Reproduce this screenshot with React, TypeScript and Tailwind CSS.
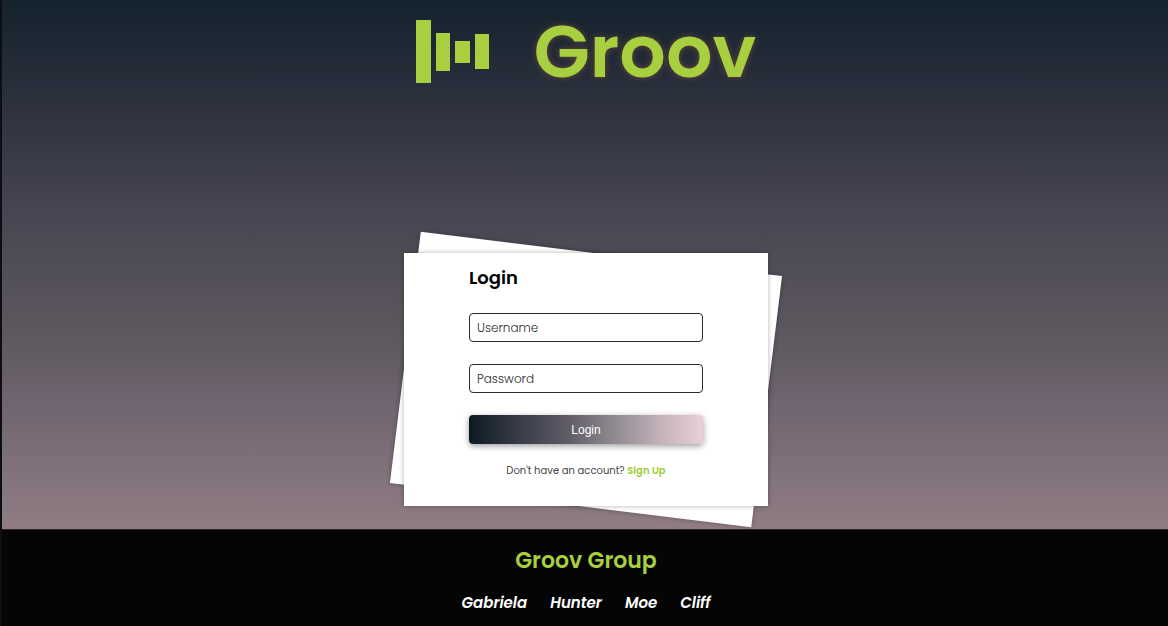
import React from "react";

const members = ["Gabriela", "Hunter", "Moe", "Cliff"];

function Logo() {
  return (
    <svg width="74" height="64" viewBox="0 0 74 64" fill="#a7cf40" aria-hidden="true">
      <rect x="0" y="0" width="15" height="63" />
      <rect x="20" y="13" width="14" height="38" />
      <rect x="39" y="21" width="15" height="22" />
      <rect x="59" y="14" width="14" height="35" />
    </svg>
  );
}

function Header() {
  return (
    <header className="flex items-center justify-center gap-11 pt-4">
      <Logo />
      <h1 className="text-[73px] leading-[72px] font-semibold text-[#a7cf40] [text-shadow:0_0_6px_rgba(220,120,60,0.4)]">
        Groov
      </h1>
    </header>
  );
}

function Field({ id, label, type }: { id: string; label: string; type: string }) {
  return (
    <input
      id={id}
      type={type}
      aria-label={label}
      placeholder={label}
      className="mb-[22px] block h-[29px] w-full rounded-[4px] border border-[#2b2b2b] bg-white px-[7px] text-xs font-light text-[#333] placeholder:text-[#2b2b2b]"
    />
  );
}

function LoginCard() {
  return (
    <section className="relative isolate w-[364px] bg-white px-[65px] pt-3 pb-[25px]">
      <div className="absolute inset-0 -z-20 rotate-7 bg-white shadow-[0_0_5px_rgba(0,0,0,0.3)]" />
      <div className="absolute inset-0 -z-10 bg-white shadow-[0_0_5px_rgba(0,0,0,0.3)]" />
      <form onSubmit={(event) => event.preventDefault()}>
        <h2 className="mb-[22px] text-[18px] leading-[26px] font-semibold text-black">Login</h2>
        <Field id="username" label="Username" type="text" />
        <Field id="password" label="Password" type="password" />
        <button
          type="submit"
          className="block h-[29px] w-full rounded-[4px] bg-[linear-gradient(to_right,#0b1922,#3a3c4a_22%,#5f5b66_42%,#8b858d_60%,#c4b2b9_82%,#e8d0d8)] font-['Liberation_Sans',Arial,sans-serif] text-xs text-white shadow-[0_2px_6px_rgba(0,0,0,0.4)]"
        >
          Login
        </button>
        <p className="mt-[17px] text-center text-[10px] leading-5 whitespace-nowrap text-[#444]">
          Don't have an account?{" "}
          <a href="#signup" className="font-semibold text-[#a0cd34]">
            Sign Up
          </a>
        </p>
      </form>
    </section>
  );
}

function Footer() {
  return (
    <footer className="border-t border-[#2a252a] bg-[#050505] pt-[13px] pb-[11px] pl-0.5 text-center">
      <h2 className="text-[22px] leading-9 font-semibold text-[#a7cf40]">Groov Group</h2>
      <ul className="mt-3 flex justify-center gap-[23px] text-[15px] leading-6 font-semibold text-white italic">
        {members.map((name) => (
          <li key={name}>{name}</li>
        ))}
      </ul>
    </footer>
  );
}

export default function App() {
  return (
    <div className="flex min-h-screen flex-col border-l-2 border-[#0c0e14] font-[Poppins,Inter,sans-serif]">
      <div className="flex grow flex-col items-center justify-between gap-10 bg-[linear-gradient(#14232e_0%,#2d313e_20%,#494753_42%,#5f5960_65%,#6f6470_76%,#907d84_100%)] pb-[23px] pl-0.5">
        <Header />
        <LoginCard />
      </div>
      <Footer />
    </div>
  );
}
